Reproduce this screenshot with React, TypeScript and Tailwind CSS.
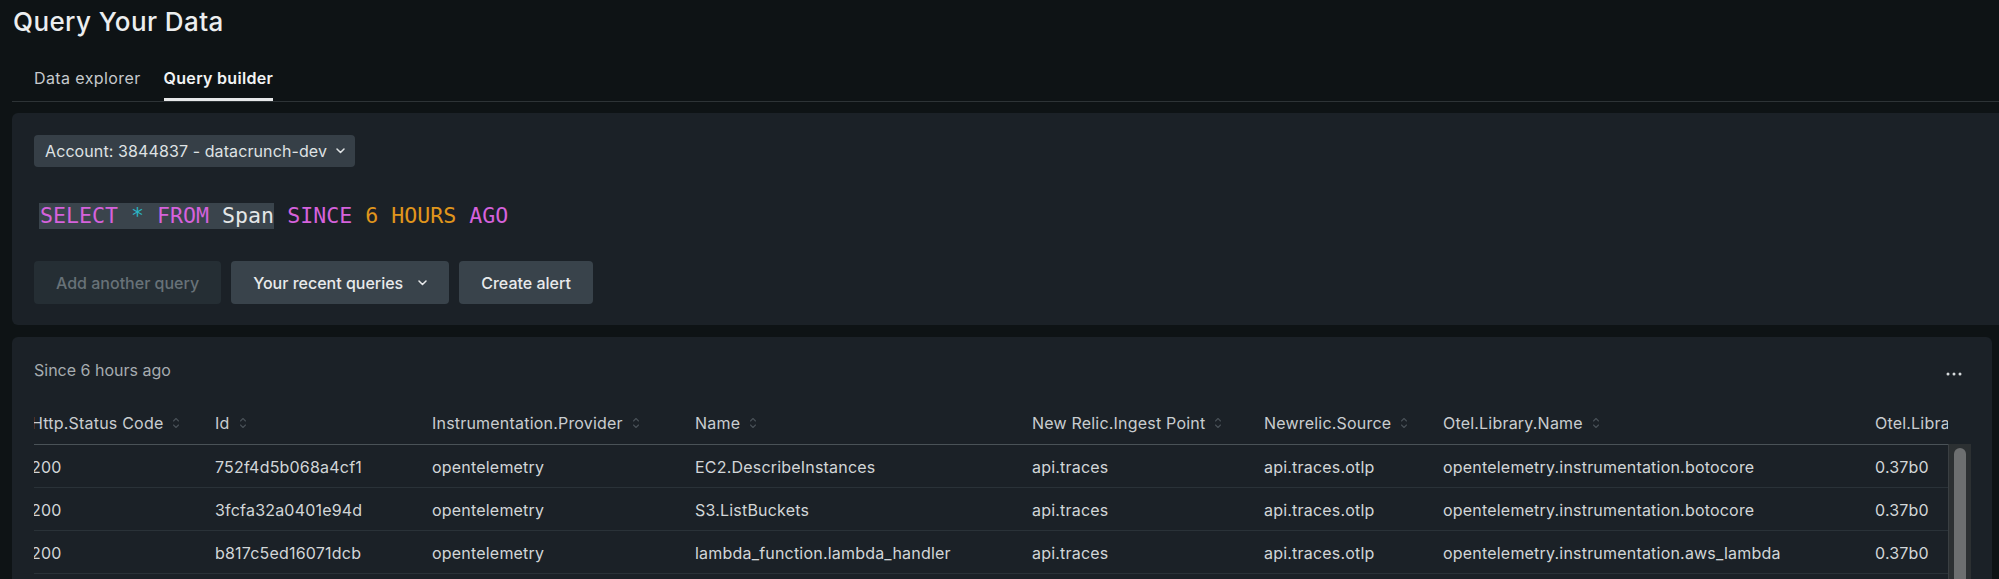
import React from 'react';

const COLS = [
  { label: 'Http.Status Code', w: 'w-[184px]', sort: true },
  { label: 'Id', w: 'w-[217px]', sort: true },
  { label: 'Instrumentation.Provider', w: 'w-[263px]', sort: true },
  { label: 'Name', w: 'w-[337px]', sort: true },
  { label: 'New Relic.Ingest Point', w: 'w-[232px]', sort: true },
  { label: 'Newrelic.Source', w: 'w-[179px]', sort: true },
  { label: 'Otel.Library.Name', w: 'w-[432px]', sort: true },
  { label: 'Otel.Library.Version', w: 'w-[220px]', sort: true },
];

const ROWS = [
  ['200', '752f4d5b068a4cf1', 'opentelemetry', 'EC2.DescribeInstances', 'api.traces', 'api.traces.otlp', 'opentelemetry.instrumentation.botocore', '0.37b0'],
  ['200', '3fcfa32a0401e94d', 'opentelemetry', 'S3.ListBuckets', 'api.traces', 'api.traces.otlp', 'opentelemetry.instrumentation.botocore', '0.37b0'],
  ['200', 'b817c5ed16071dcb', 'opentelemetry', 'lambda_function.lambda_handler', 'api.traces', 'api.traces.otlp', 'opentelemetry.instrumentation.aws_lambda', '0.37b0'],
  ['200', '1a9e03c7f5b2d846', 'opentelemetry', 'EC2.DescribeInstances', 'api.traces', 'api.traces.otlp', 'opentelemetry.instrumentation.botocore', '0.37b0'],
];

export default function App() {
  return (
    <div className="h-[579px] w-full overflow-hidden bg-[#0e1315] font-['Inter','Liberation_Sans',sans-serif] text-[#d2d6d8]">
      {/* Title */}
      <h1 className="pl-[13px] pt-[6px] text-[26px] font-medium leading-[32px] tracking-[0.4px] text-[#eceeef]">Query Your Data</h1>

      {/* Tabs */}
      <div className="ml-[12px] flex gap-[23px] border-b border-[#2d3336] px-[22px]">
        <button className="border-b-[3px] border-transparent pt-[30px] pb-[10px] text-[16px] leading-[20px] tracking-[0.4px] text-[#c6cacd]">
          Data explorer
        </button>
        <button className="border-b-[3px] border-[#e6e8e9] pt-[30px] pb-[10px] text-[16px] font-semibold leading-[20px] tracking-[0.3px] text-[#f2f3f4]">
          Query builder
        </button>
      </div>

      {/* Query panel */}
      <div className="ml-[12px] mt-[11px] rounded-l-[6px] bg-[#1b2127] p-[22px] pb-[21px]">
        <button className="flex h-[32px] items-center gap-[9px] rounded-[4px] bg-[#363f47] pl-[11px] pr-[10px] text-[16px] tracking-[0.1px] text-[#dfe2e4]">
          Account: 3844837 - datacrunch-dev
          <ChevronDown />
        </button>

        <div className="mt-[36px] pl-[6px] font-['DejaVu_Sans_Mono','Liberation_Mono',monospace] text-[21.6px] leading-[26px] whitespace-pre">
          <span className="-ml-[1px] inline-block h-[26px] bg-[#3a444c] pl-[1px]">
            <span className="text-[#d562dc]">SELECT</span>{' '}
            <span className="text-[#2bb5c4]">*</span>{' '}
            <span className="text-[#d562dc]">FROM</span>{' '}
            <span className="text-[#e4e6e7]">Span</span>
          </span>{' '}
          <span className="text-[#d562dc]">SINCE</span>{' '}
          <span className="text-[#e0961c]">6</span>{' '}
          <span className="text-[#e0961c]">HOURS</span>{' '}
          <span className="text-[#d562dc]">AGO</span>
        </div>

        <div className="mt-[32px] flex gap-[10px]">
          <button className="h-[43px] rounded-[4px] bg-[#252e34] px-[22px] text-[16px] font-medium text-[#687278]">
            Add another query
          </button>
          <button className="flex h-[43px] items-center gap-[15px] rounded-[4px] bg-[#39434b] px-[22px] text-[16px] font-medium text-[#e8eaeb]">
            Your recent queries
            <ChevronDown />
          </button>
          <button className="h-[43px] rounded-[4px] bg-[#39434b] px-[22px] text-[16px] font-medium text-[#e8eaeb]">
            Create alert
          </button>
        </div>
      </div>

      {/* Results panel */}
      <div className="ml-[12px] mr-[7px] mt-[12px] rounded-[6px] bg-[#1b2127] pl-[22px] pr-[21px] pt-[23px]">
        <div className="flex h-[20px] items-start justify-between">
          <span className="text-[16px] leading-[20px] text-[#a6acb0]">Since 6 hours ago</span>
          <svg width="16" height="4" viewBox="0 0 16 4" className="mr-[9px] mt-[12px] text-[#d6dadc]" fill="currentColor">
            <circle cx="2" cy="2" r="1.5" />
            <circle cx="8" cy="2" r="1.5" />
            <circle cx="14" cy="2" r="1.5" />
          </svg>
        </div>

        <div className="mt-[21px] flex">
          <div className="min-w-0 flex-1 overflow-hidden">
            <div className="-ml-[3px] w-max">
              <div className="flex h-[44px] items-center border-b border-[#4a5257] text-[16px] tracking-[0.2px] text-[#c9cdd0]">
                {COLS.map((c) => (
                  <div key={c.label} className={`${c.w} flex shrink-0 items-center gap-[9px]`}>
                    <span>{c.label}</span>
                    {c.sort && <SortIcon />}
                  </div>
                ))}
              </div>
              {ROWS.map((r, i) => (
                <div key={i} className="flex h-[43px] items-center border-b border-[#2a3238] pt-[1px] text-[16px] tracking-[0.2px] text-[#d2d6d8]">
                  {r.map((cell, j) => (
                    <div key={j} className={`${COLS[j].w} shrink-0`}>
                      {cell}
                    </div>
                  ))}
                </div>
              ))}
            </div>
          </div>

          {/* Vertical scrollbar */}
          <div className="mt-[43px] h-[200px] w-[23px] shrink-0 border-l border-[#3a3f42] bg-[#2c3032] px-[5px] pt-[4px]">
            <div className="h-[160px] w-[12px] rounded-full bg-[#6d6f70]" />
          </div>
        </div>
      </div>
    </div>
  );
}

function ChevronDown() {
  return (
    <svg width="9" height="6" viewBox="0 0 9 6" fill="none" stroke="currentColor" strokeWidth={1.5} strokeLinecap="round" strokeLinejoin="round">
      <path d="M1 1l3.5 3.5L8 1" />
    </svg>
  );
}

function SortIcon() {
  return (
    <svg width="8" height="14" viewBox="0 0 8 14" fill="none" stroke="#485056" strokeWidth={1.1} strokeLinecap="round" strokeLinejoin="round">
      <path d="M1.5 5L4 2.5 6.5 5" />
      <path d="M1.5 9L4 11.5 6.5 9" />
    </svg>
  );
}
